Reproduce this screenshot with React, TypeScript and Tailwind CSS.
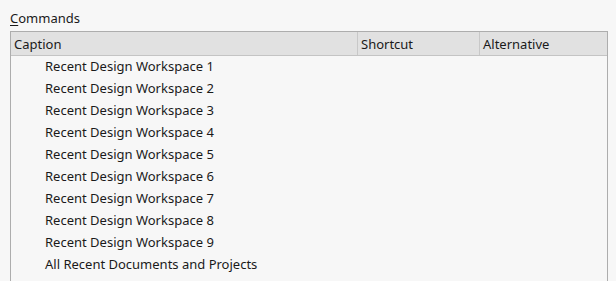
const rows = [
  'Recent Design Workspace 1',
  'Recent Design Workspace 2',
  'Recent Design Workspace 3',
  'Recent Design Workspace 4',
  'Recent Design Workspace 5',
  'Recent Design Workspace 6',
  'Recent Design Workspace 7',
  'Recent Design Workspace 8',
  'Recent Design Workspace 9',
  'All Recent Documents and Projects',
];

export default function App() {
  return (
    <div
      className="h-[281px] w-[616px] overflow-hidden bg-[#f7f7f7] pl-[10px] pt-[8px] text-[13px] text-[#1a1a1a]"
      style={{ fontFamily: '"Noto Sans", "Open Sans", sans-serif' }}
    >
      <div className="h-[23px] leading-[20px]">
        <span className="underline underline-offset-2">C</span>ommands
      </div>
      <div className="w-[598px] h-[260px] border border-b-0 border-[#adadad] bg-[#f7f7f7]">
        {/* header */}
        <div className="flex h-[24px] items-center border-b border-[#c4c4c4] bg-[#e1e1e1] leading-[20px]">
          <div className="w-[346px] h-full pl-[3px] flex items-center">Caption</div>
          <div className="w-[122px] h-full pl-[3px] flex items-center border-l border-[#c8c8c8]">Shortcut</div>
          <div className="flex-1 h-full pl-[3px] flex items-center border-l border-[#c8c8c8]">Alternative</div>
        </div>
        {rows.map((r) => (
          <div key={r} className="h-[22px] pl-[34px] flex items-center">
            {r}
          </div>
        ))}
      </div>
    </div>
  );
}
